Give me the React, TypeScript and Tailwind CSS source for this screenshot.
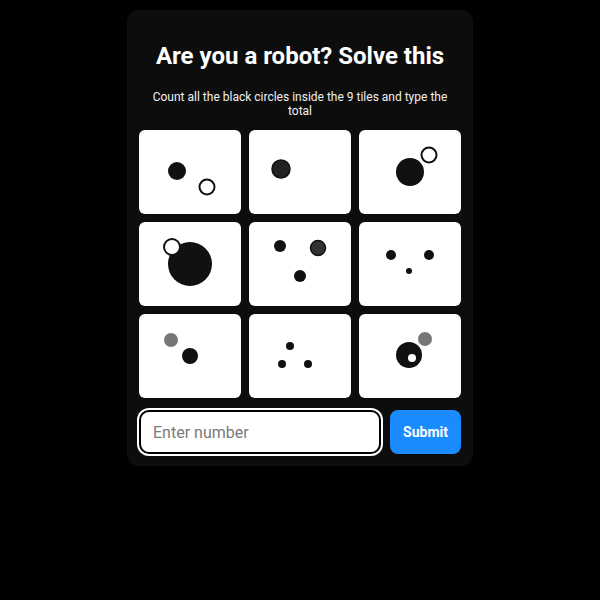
import React from "react";

type Dot = { cx: number; cy: number; r: number; fill: string; stroke?: string; sw?: number };

const TILES: Dot[][] = [
  [
    { cx: 38, cy: 41, r: 9, fill: "#111" },
    { cx: 68, cy: 57, r: 7.5, fill: "#fff", stroke: "#111", sw: 2 },
  ],
  [{ cx: 32, cy: 39, r: 9, fill: "#222", stroke: "#111", sw: 1.5 }],
  [
    { cx: 51, cy: 42, r: 14, fill: "#111" },
    { cx: 70, cy: 25, r: 7.5, fill: "#fff", stroke: "#111", sw: 2 },
  ],
  [
    { cx: 51, cy: 42, r: 22, fill: "#111" },
    { cx: 33, cy: 25, r: 8, fill: "#fff", stroke: "#111", sw: 2 },
  ],
  [
    { cx: 31, cy: 24, r: 6, fill: "#111" },
    { cx: 69, cy: 26, r: 7.5, fill: "#333", stroke: "#111", sw: 1.5 },
    { cx: 51, cy: 54, r: 6, fill: "#111" },
  ],
  [
    { cx: 32, cy: 33, r: 5, fill: "#111" },
    { cx: 70, cy: 33, r: 5, fill: "#111" },
    { cx: 50, cy: 49, r: 3, fill: "#111" },
  ],
  [
    { cx: 32, cy: 26, r: 7, fill: "#777" },
    { cx: 51, cy: 42, r: 8, fill: "#111" },
  ],
  [
    { cx: 41, cy: 32, r: 4, fill: "#111" },
    { cx: 33, cy: 50, r: 4, fill: "#111" },
    { cx: 59, cy: 50, r: 4, fill: "#111" },
  ],
  [
    { cx: 50, cy: 41, r: 13, fill: "#111" },
    { cx: 53, cy: 44, r: 4, fill: "#fff" },
    { cx: 66, cy: 25, r: 7, fill: "#777" },
  ],
];

function Tile({ dots }: { dots: Dot[] }) {
  return (
    <div className="h-[84px] rounded-md bg-white overflow-hidden">
      <svg viewBox="0 0 102 84" className="w-full h-full" aria-hidden="true">
        {dots.map((d, i) => (
          <circle key={i} cx={d.cx} cy={d.cy} r={d.r} fill={d.fill} stroke={d.stroke} strokeWidth={d.sw} />
        ))}
      </svg>
    </div>
  );
}

export default function App() {
  return (
    <div className="w-[600px] h-[600px] bg-black flex justify-center pt-[10px] font-['Roboto','Liberation_Sans',sans-serif]">
      <div className="w-[346px] h-[456px] bg-[#0d0d0d] rounded-xl px-3 flex flex-col">
        <h1 className="mt-[31px] text-center text-white text-[24px] font-bold leading-[30px]">
          Are you a robot? Solve this
        </h1>
        <p className="mt-[19px] mx-auto w-[306px] text-center text-[#f0f0f0] text-[12px] leading-[14px]">
          Count all the black circles inside the 9 tiles and type the total
        </p>
        <div className="mt-[12px] grid grid-cols-3 gap-2">
          {TILES.map((t, i) => (
            <Tile key={i} dots={t} />
          ))}
        </div>
        <div className="mt-3 flex gap-[9px]">
          <input
            type="text"
            placeholder="Enter number"
            className="flex-1 min-w-0 h-[44px] rounded-[10px] bg-white border-2 border-black ring-2 ring-white px-3 text-[16px] text-black placeholder:text-[#7a7a7a] outline-none"
          />
          <button
            type="button"
            className="w-[71px] h-[44px] rounded-lg bg-[#1a8cff] text-white text-[14px] font-bold"
          >
            Submit
          </button>
        </div>
      </div>
    </div>
  );
}
